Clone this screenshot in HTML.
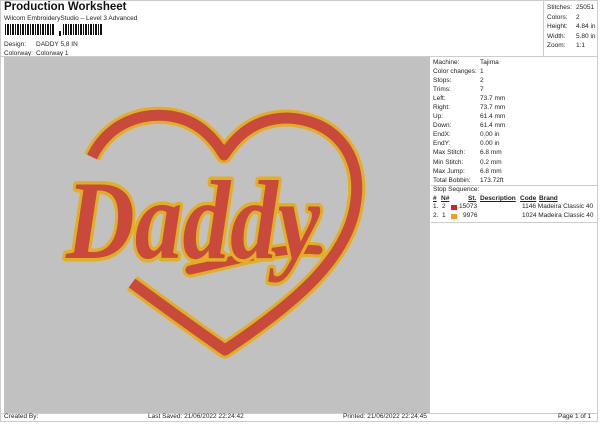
<!DOCTYPE html>
<html><head><style>
body{margin:0;width:600px;height:424px;background:#fff;position:relative;overflow:hidden;font-family:"Liberation Sans",sans-serif;color:#222}
.a{position:absolute;white-space:nowrap}
.s{font-size:6.5px}
</style></head><body>
<div class="a" style="left:4px;top:1px;font-size:11.5px;font-weight:bold;color:#111">Production Worksheet</div>
<div class="a s" style="left:4px;top:15px">Wilcom EmbroideryStudio – Level 3 Advanced</div>
<svg class="a" style="left:4px;top:23px" width="100" height="15">
<g fill="#111">
<rect x="1" y="1" width="1" height="11"/><rect x="3" y="1" width="2" height="11"/><rect x="6" y="1" width="1" height="11"/><rect x="8" y="1" width="2" height="11"/><rect x="11" y="1" width="1" height="11"/><rect x="13" y="1" width="2" height="11"/><rect x="16" y="1" width="1" height="11"/><rect x="18" y="1" width="2" height="11"/><rect x="21" y="1" width="1" height="11"/><rect x="23" y="1" width="2" height="11"/><rect x="26" y="1" width="1" height="11"/><rect x="28" y="1" width="2" height="11"/><rect x="31" y="1" width="1" height="11"/><rect x="33" y="1" width="2" height="11"/><rect x="36" y="1" width="1" height="11"/><rect x="38" y="1" width="2" height="11"/><rect x="41" y="1" width="1" height="11"/><rect x="43" y="1" width="2" height="11"/><rect x="46" y="1" width="1" height="11"/><rect x="48" y="1" width="2" height="11"/>
<rect x="55" y="8" width="2" height="5"/>
<rect x="59" y="1" width="1" height="11"/><rect x="61" y="1" width="2" height="11"/><rect x="64" y="1" width="1" height="11"/><rect x="66" y="1" width="2" height="11"/><rect x="69" y="1" width="1" height="11"/><rect x="71" y="1" width="2" height="11"/><rect x="74" y="1" width="1" height="11"/><rect x="76" y="1" width="2" height="11"/><rect x="79" y="1" width="1" height="11"/><rect x="81" y="1" width="2" height="11"/><rect x="84" y="1" width="1" height="11"/><rect x="86" y="1" width="2" height="11"/><rect x="89" y="1" width="1" height="11"/><rect x="91" y="1" width="2" height="11"/><rect x="94" y="1" width="1" height="11"/><rect x="96" y="1" width="2" height="11"/>
</g></svg>
<div class="a s" style="left:4px;top:41px">Design:</div><div class="a s" style="left:36px;top:41px">DADDY 5,8 IN</div>
<div class="a s" style="left:4px;top:50px">Colorway:</div><div class="a s" style="left:36px;top:50px">Colorway 1</div>
<div class="a" style="left:0;top:0;width:598px;height:56px;border:1px solid #ccc;border-bottom:none;box-sizing:border-box"></div>
<div class="a" style="left:543px;top:0;width:55px;height:56px;border-left:1px solid #ccc"></div>
<div class="a s" style="left:547px;top:3px;line-height:9.6px">Stitches:<br>Colors:<br>Height:<br>Width:<br>Zoom:</div>
<div class="a s" style="left:576px;top:3px;line-height:9.6px">25051<br>2<br>4.84 in<br>5.80 in<br>1:1</div>
<div class="a" style="left:4px;top:57px;width:426px;height:356px;background:#c1c1c1"></div>
<div class="a" style="left:0;top:56px;width:598px;height:358px;border:1px solid #ccc;box-sizing:border-box"></div>
<div class="a s" style="left:433px;top:58px;line-height:9.05px">Machine:<br>Color changes:<br>Stops:<br>Trims:<br>Left:<br>Right:<br>Up:<br>Down:<br>EndX:<br>EndY:<br>Max Stitch:<br>Min Stitch:<br>Max Jump:<br>Total Bobbin:</div>
<div class="a s" style="left:480px;top:58px;line-height:9.05px">Tajima<br>1<br>2<br>7<br>73.7 mm<br>73.7 mm<br>61.4 mm<br>61.4 mm<br>0.00 in<br>0.00 in<br>6.8 mm<br>0.2 mm<br>6.8 mm<br>173.72ft</div>
<div class="a" style="left:431px;top:185px;width:167px;border-top:1px solid #ccc"></div>
<div class="a s" style="left:433px;top:186px">Stop Sequence:</div>
<div class="a s" style="top:195px;left:433px;font-weight:bold;text-decoration:underline">#</div>
<div class="a s" style="top:195px;left:441px;font-weight:bold;text-decoration:underline">N#</div>
<div class="a s" style="top:195px;left:468px;font-weight:bold;text-decoration:underline">St.</div>
<div class="a s" style="top:195px;left:480px;font-weight:bold;text-decoration:underline">Description</div>
<div class="a s" style="top:195px;left:520px;font-weight:bold;text-decoration:underline">Code</div>
<div class="a s" style="top:195px;left:539px;font-weight:bold;text-decoration:underline">Brand</div>
<div class="a s" style="top:203px;left:433px">1.&nbsp; 2</div><div class="a" style="top:205px;left:451px;width:6px;height:5px;background:#d42222"></div><div class="a s" style="top:203px;left:459px">15073</div><div class="a s" style="top:203px;left:522px">1146 Madeira Classic 40</div>
<div class="a s" style="top:212px;left:433px">2.&nbsp; 1</div><div class="a" style="top:214px;left:451px;width:6px;height:5px;background:#f0a020"></div><div class="a s" style="top:212px;left:463px">9976</div><div class="a s" style="top:212px;left:522px">1024 Madeira Classic 40</div>
<div class="a" style="left:431px;top:222px;width:167px;border-top:1px solid #ccc"></div>
<div class="a s" style="left:4px;top:413px">Created By:</div>
<div class="a s" style="left:148px;top:413px">Last Saved: 21/06/2022 22:24:42</div>
<div class="a s" style="left:343px;top:413px">Printed: 21/06/2022 22:24:45</div>
<div class="a s" style="left:558px;top:413px">Page 1 of 1</div>
<div class="a" style="left:0;top:413px;width:598px;height:9px;border:1px solid #ccc;border-top:none;box-sizing:border-box"></div>
<svg class="a" style="left:0;top:0" width="600" height="424">
<g fill="none" stroke-linecap="butt" stroke-linejoin="round">
<path id="h" d="M92 157 C108 124 140 112 170 116 C198 120 214 138 224 155 C236 136 255 118 288 118 C332 120 362 152 356 200 C350 255 300 300 225 350 C185 322 155 300 132 283"/>
<use href="#h" stroke="#e0b020" stroke-width="17"/>
<use href="#h" stroke="#c94a3c" stroke-width="11"/>
<path d="M190 270 C230 262 280 246 318 250" stroke="#e0b020" stroke-width="15" stroke-linecap="round"/>
<path d="M190 270 C230 262 280 246 318 250" stroke="#c94a3c" stroke-width="9" stroke-linecap="round"/>
</g>
<text x="66" y="258" font-family="Liberation Serif" font-style="italic" font-weight="bold" font-size="112" textLength="254" lengthAdjust="spacingAndGlyphs" fill="#c94a3c" stroke="#e0b020" stroke-width="7" stroke-linejoin="round" paint-order="stroke" style="paint-order:stroke">Daddy</text>
</svg>
</body></html>
